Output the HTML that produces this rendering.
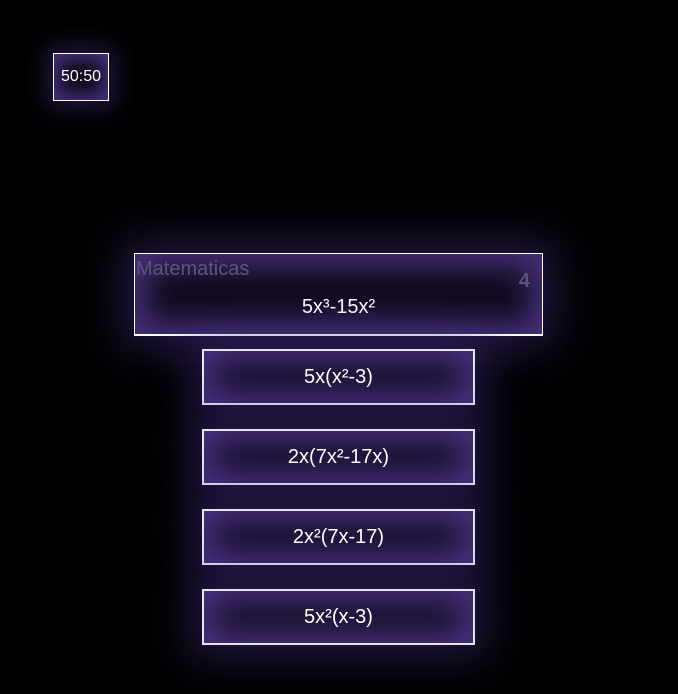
<!DOCTYPE html>
<html><head><style>
body{margin:0;width:678px;height:694px;background:#000;position:relative;overflow:hidden;font-family:"Liberation Sans",sans-serif;}
.b{position:absolute;box-sizing:border-box;background:#110a1c;box-shadow:inset 0 0 30px 12px #46307c,0 0 45px 12px rgba(70,48,135,0.5);color:#fff;text-align:center;}
.q{left:134px;top:253px;width:409px;height:83px;border:1px solid #fff;border-bottom:2px solid #fff;}
.a{left:202px;width:273px;height:56px;border:2px solid #e8e4f2;font-size:20px;line-height:52px;}
.f{left:53px;top:53px;width:56px;height:48px;border:1px solid #fff;font-size:16px;line-height:46px;box-shadow:inset 0 0 16px 6px #46307c,0 0 24px 6px rgba(70,48,135,0.5);}
</style></head><body>
<div class="b f">50:50</div>
<div class="b q">
<div style="position:absolute;left:1px;top:4px;font-size:20px;color:#5e5479">Matematicas</div>
<div style="position:absolute;right:12px;top:16px;font-size:20px;font-weight:bold;color:#5e5479">4</div>
<div style="position:absolute;left:0;right:0;top:42px;font-size:20px">5x³-15x²</div>
</div>
<div class="b a" style="top:349px">5x(x²-3)</div>
<div class="b a" style="top:429px">2x(7x²-17x)</div>
<div class="b a" style="top:509px">2x²(7x-17)</div>
<div class="b a" style="top:589px">5x²(x-3)</div>
</body></html>
